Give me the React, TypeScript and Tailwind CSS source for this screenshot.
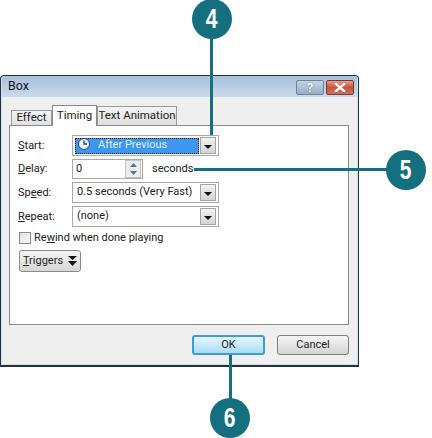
const font = "font-['Roboto',sans-serif]";

// dropdown arrow button used by the combo boxes
const DropButton = () => (
  <div className="flex h-[17px] w-[16px] shrink-0 items-center justify-center border border-[#a4a4a4] bg-gradient-to-b from-[#f2f2f2] to-[#d2d2d2]">
    <svg width="8" height="4" viewBox="0 0 8 4" className="mt-[2px]">
      <path d="M0 0h8L4 4z" fill="#111" />
    </svg>
  </div>
);

const Label = ({ before, mark, after }: { before?: string; mark: string; after: string }) => (
  <span className="w-[62px] shrink-0 pl-[8px] pt-[1px] text-[#222]">
    {before}
    <span className="underline underline-offset-1">{mark}</span>
    {after}
  </span>
);

const Combo = ({ text }: { text: string }) => (
  <div className="flex h-[21px] w-[147px] items-center justify-between border border-[#a9a9a9] bg-white pl-[4px] pr-[2px]">
    <span className="text-[#222]">{text}</span>
    <DropButton />
  </div>
);

const Callout = ({ n, className }: { n: string; className: string }) => (
  <div
    className={`absolute flex h-[40px] w-[40px] items-center justify-center rounded-full bg-[#14707f] font-['Liberation_Sans',sans-serif] text-[27px] font-bold text-white ${className}`}
  >
    <span className="inline-block scale-x-[0.78]">{n}</span>
  </div>
);

const App = () => {
  return (
    <div className={`relative h-[438px] w-[432px] overflow-hidden whitespace-nowrap bg-white pt-[75px] text-[11px] ${font}`}>
      {/* Dialog window */}
      <div className="flex h-[292px] w-[359px] flex-col rounded-t-[4px] border border-b-2 border-[#2a3038] bg-[#c6e3f2] px-[1px] pb-[1px]">
        <div className="flex h-full flex-col rounded-t-[3px] bg-[#efefef]">
          {/* Title bar */}
          <div className="flex h-[21px] shrink-0 items-center justify-between rounded-t-[3px] bg-gradient-to-b from-[#a6c0dc] to-[#c9daec] pl-[6px] pr-[3px] text-[12.500px] text-[#111]">
            <span>Box</span>
            <div className="mt-[1px] flex gap-[2px]">
              <div className="flex h-[15px] w-[28px] items-center justify-center rounded-[2px] border border-[#6f8296] bg-gradient-to-b from-[#c5d5e5] to-[#95adc6] text-[13px] font-bold leading-none text-white [text-shadow:0_0_1px_#333]">
                ?
              </div>
              <div className="flex h-[15px] w-[28px] items-center justify-center rounded-[2px] border border-[#7a3a30] bg-gradient-to-b from-[#e59d8b] via-[#c8543c] to-[#c9735f]">
                <svg width="12" height="9" viewBox="0 0 12 9">
                  <path d="M2 1l8 7M10 1L2 8" stroke="#fff" strokeWidth="2.400" strokeLinecap="square" />
                </svg>
              </div>
            </div>
          </div>

          {/* Tabs */}
          <div className="mt-[8px] flex h-[20px] shrink-0 items-end pl-[9px] text-[11.500px] text-[#222]">
            <div className="flex h-[15px] w-[41px] items-center justify-center border border-b-0 border-[#9a9a9a] bg-gradient-to-b from-[#f4f4f4] to-[#e0e0e0]">
              Effect
            </div>
            <div className="relative z-10 mb-[-1px] flex h-[21px] w-[45px] items-start justify-center border border-b-0 border-[#8a8a8a] bg-white pt-[1px]">
              Timing
            </div>
            <div className="flex h-[19px] w-[80px] items-center justify-center border border-b-0 border-[#9a9a9a] bg-gradient-to-b from-[#f4f4f4] to-[#dedede]">
              Text Animation
            </div>
          </div>

          {/* Tab panel */}
          <div className="ml-[7px] flex h-[200px] w-[340px] shrink-0 flex-col border border-[#8a8a8a] bg-white pt-[9px]">
            <div className="flex items-center">
              <Label mark="S" after="tart:" />
              <div className="flex h-[21px] w-[147px] items-center justify-between border border-[#a9a9a9] bg-white pl-[2px] pr-[2px]">
                <div className="flex h-[16px] w-[124px] items-center gap-[8px] border border-dotted border-[#111] bg-[#3d97f0] pl-[2px] text-[#e0eeff]">
                  <svg width="12" height="12" viewBox="0 0 12 12" className="-mt-[3px]">
                    <circle cx="6" cy="6" r="5.500" fill="#eef3fb" stroke="#24469a" />
                    <path d="M6 2.500V6h3" fill="none" stroke="#24469a" strokeWidth="1.300" />
                  </svg>
                  After Previous
                </div>
                <DropButton />
              </div>
            </div>

            <div className="mt-[3px] flex items-center">
              <Label mark="D" after="elay:" />
              <div className="flex h-[20px] w-[71px] items-center justify-between border border-[#a9a9a9] bg-white pl-[3px] pr-[1px]">
                <span className="text-[#222]">0</span>
                <div className="flex h-[18px] w-[16px] flex-col items-center justify-around border border-[#c4c4c4] bg-[#ececec]">
                  <svg width="7" height="4" viewBox="0 0 7 4">
                    <path d="M0 4h7L3.500 0z" fill="#5b6fa0" />
                  </svg>
                  <svg width="7" height="4" viewBox="0 0 7 4">
                    <path d="M0 0h7L3.500 4z" fill="#5b6fa0" />
                  </svg>
                </div>
              </div>
              <span className="ml-[9px] text-[#222]">seconds</span>
            </div>

            <div className="mt-[3px] flex items-center">
              <Label before="Sp" mark="e" after="ed:" />
              <Combo text="0.5 seconds (Very Fast)" />
            </div>

            <div className="mt-[3px] flex items-center">
              <Label mark="R" after="epeat:" />
              <Combo text="(none)" />
            </div>

            <div className="mt-[3px] flex h-[16px] items-center pl-[9px] text-[#222]">
              <div className="h-[12px] w-[12px] border border-[#8a8a8a] bg-gradient-to-br from-[#e2e2e2] to-[#fafafa]" />
              <span className="ml-[3px]">
                Re<span className="underline underline-offset-1">w</span>ind when done playing
              </span>
            </div>

            <div className="ml-[9px] mt-[4px] flex h-[22px] w-[62px] items-center justify-center gap-[5px] rounded-[3px] border border-[#8a8a8a] bg-gradient-to-b from-[#f6f6f6] to-[#d6d6d6] text-[#222]">
              <span>
                <span className="underline underline-offset-1">T</span>riggers
              </span>
              <svg width="9" height="10" viewBox="0 0 9 10">
                <path d="M0 0h9L4.500 4zM0 5h9L4.500 10z" fill="#111" />
              </svg>
            </div>
          </div>

          {/* Footer buttons */}
          <div className="mt-[10px] flex justify-end gap-[12px] pr-[8px] text-[#222]">
            <div className="flex h-[20px] w-[73px] items-center justify-center rounded-[3px] border-2 border-[#3c9fd2] bg-gradient-to-b from-[#e6f5fd] to-[#aadcf6]">
              OK
            </div>
            <div className="flex h-[20px] w-[72px] items-center justify-center rounded-[3px] border border-[#7f7f7f] bg-gradient-to-b from-[#f6f6f6] to-[#d4d4d4]">
              Cancel
            </div>
          </div>
        </div>
      </div>

      {/* Callouts */}
      <div className="absolute left-[210px] top-[38px] h-[97px] w-[3px] bg-[#14707f]" />
      <Callout n="4" className="left-[192px] top-[-1px]" />
      <div className="absolute left-[194px] top-[168px] h-[3px] w-[194px] bg-[#14707f]" />
      <Callout n="5" className="left-[386px] top-[150px]" />
      <div className="absolute left-[229px] top-[355px] h-[44px] w-[3px] bg-[#14707f]" />
      <Callout n="6" className="left-[210px] top-[398px]" />
    </div>
  );
};

export default App;
